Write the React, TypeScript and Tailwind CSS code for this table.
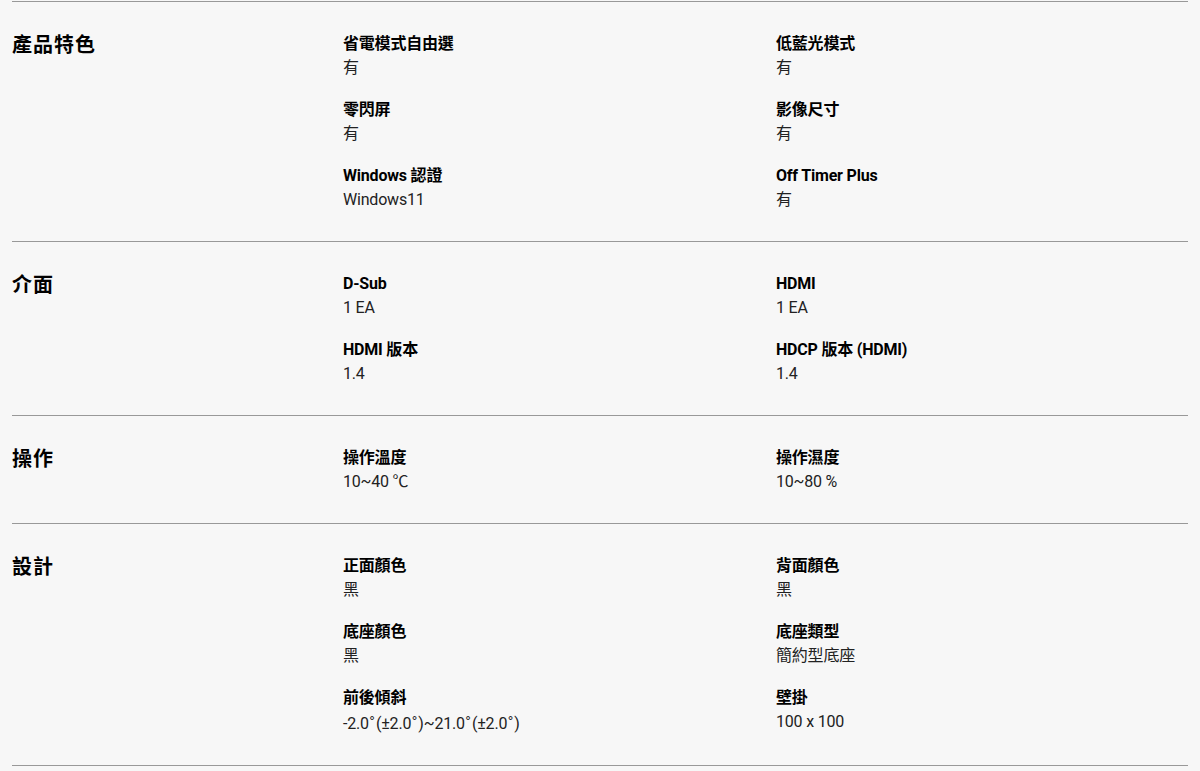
import React from 'react';

type Spec = { label: string; value: React.ReactNode };
type Section = { title: string; items: Spec[] };

const Deg = () => (
  <span className="mx-[1px]" style={{ fontFamily: '"Noto Sans CJK TC", sans-serif' }}>
    ˚
  </span>
);

const sections: Section[] = [
  {
    title: '產品特色',
    items: [
      { label: '省電模式自由選', value: '有' },
      { label: '低藍光模式', value: '有' },
      { label: '零閃屏', value: '有' },
      { label: '影像尺寸', value: '有' },
      { label: 'Windows 認證', value: 'Windows11' },
      { label: 'Off Timer Plus', value: '有' },
    ],
  },
  {
    title: '介面',
    items: [
      { label: 'D-Sub', value: '1 EA' },
      { label: 'HDMI', value: '1 EA' },
      { label: 'HDMI 版本', value: '1.4' },
      { label: 'HDCP 版本 (HDMI)', value: '1.4' },
    ],
  },
  {
    title: '操作',
    items: [
      { label: '操作溫度', value: '10~40 ℃' },
      { label: '操作濕度', value: '10~80 %' },
    ],
  },
  {
    title: '設計',
    items: [
      { label: '正面顏色', value: '黑' },
      { label: '背面顏色', value: '黑' },
      { label: '底座顏色', value: '黑' },
      { label: '底座類型', value: '簡約型底座' },
      {
        label: '前後傾斜',
        value: (
          <>
            -2.0<Deg />(±2.0<Deg />)~21.0<Deg />(±2.0<Deg />)
          </>
        ),
      },
      { label: '壁掛', value: '100 x 100' },
    ],
  },
];

export default function App() {
  return (
    <div
      className="min-h-[771px] w-[1200px] bg-[#f7f7f7] px-3 text-black"
      style={{ fontFamily: 'Roboto, "Noto Sans CJK TC", sans-serif' }}
    >
      <div className="h-[1px]" />
      {sections.map((s) => (
        <div key={s.title} className="grid grid-cols-[331px_433px_1fr] border-t border-[#999] pt-[30px] pb-[29px]">
          <h2 className="text-[20px] font-bold leading-[26px] tracking-[1px]">{s.title}</h2>
          <div className="col-span-2 grid grid-cols-[433px_1fr] gap-y-[18px]">
            {s.items.map((it) => (
              <div key={it.label} className="text-[16px] leading-6 tracking-[-0.2px]">
                <div className="font-bold">{it.label}</div>
                <div className="text-[#222]">{it.value}</div>
              </div>
            ))}
          </div>
        </div>
      ))}
      <div className="border-t border-[#999]" />
    </div>
  );
}
